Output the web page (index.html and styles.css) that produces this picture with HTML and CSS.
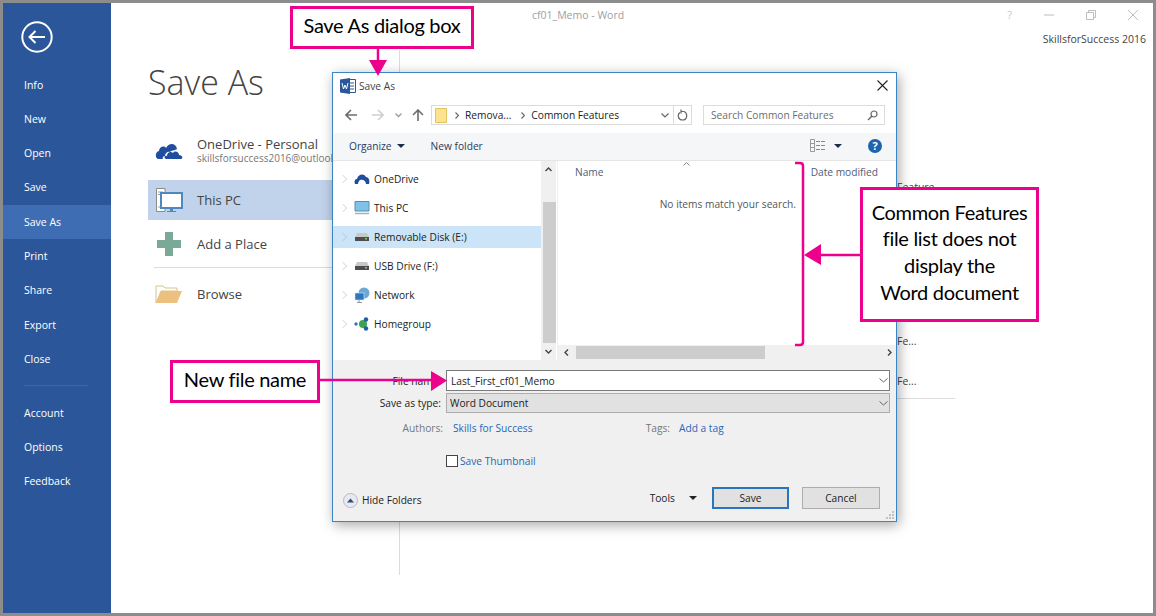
FILE: index.html
```html
<!DOCTYPE html>
<html lang="en">
<head>
    <meta charset="UTF-8">
    <title>Save As</title>
    <link rel="stylesheet" href="styles.css">
</head>
<body>
<div id="screen">
    <div id="app">
        <aside id="side">
            <svg class="back" width="32" height="32" viewBox="0 0 32 32"><circle cx="16" cy="16" r="14.7" fill="none" stroke="#fff" stroke-width="2"/><path d="M8.500 16H24M14.500 10L8.500 16L14.500 22" fill="none" stroke="#fff" stroke-width="2"/></svg>
            <ul class="menu">
                <li>Info</li>
                <li>New</li>
                <li>Open</li>
                <li>Save</li>
                <li class="on">Save As</li>
                <li>Print</li>
                <li>Share</li>
                <li>Export</li>
                <li>Close</li>
            </ul>
            <ul class="menu menu2">
                <li>Account</li>
                <li>Options</li>
                <li>Feedback</li>
            </ul>
        </aside>
        <main id="stage">
            <div class="topbar">
                <span class="doc">cf01_Memo - Word</span>
                <div class="winbtns">
                    <span class="q">?</span>
                    <svg width="10" height="10" viewBox="0 0 10 10"><path d="M0 5H10" stroke="#bdbdbd"/></svg>
                    <svg width="10" height="10" viewBox="0 0 10 10"><path d="M.5 2.500H7.500V9.500H.5ZM2.500 2.500V.5H9.500V7.500H7.500" fill="none" stroke="#bdbdbd"/></svg>
                    <svg width="10" height="10" viewBox="0 0 10 10"><path d="M0 0L10 10M10 0L0 10" stroke="#bdbdbd"/></svg>
                </div>
            </div>
            <div class="acct">SkillsforSuccess 2016</div>
            <div class="cols">
                <section class="places">
                    <h1>Save As</h1>
                    <div class="place place-two">
                        <svg class="pic" width="28" height="22" viewBox="0 0 28 22"><path d="M3 20C0 19 0 13 4 12C4 8 9 6 11 9C14 3 21 4 22 10C22 11 17 11 15 13C13 12 10 14 10 17C8 17 7 19 8 20ZM11 20C8 19 10 16 12 17C12 13 16 12 18 14C20 11 24 13 24 16C28 16 28 20 26 20Z" fill="#1f4ea1"/></svg>
                        <div>
                            <div class="pname">OneDrive - Personal</div>
                            <div class="pmail">skillsforsuccess2016@outlook.com</div>
                        </div>
                    </div>
                    <div class="place sel">
                        <svg class="pic" width="28" height="26" viewBox="0 0 28 26"><path d="M1.500 1.500H10V24.500H1.500Z" fill="#fff" stroke="#8a8a8a"/><path d="M3 5H8M3 7.500H8M3 20H8" stroke="#9a9a9a"/><path d="M6 6H27V21H6Z" fill="#fff" stroke="#4f87c0" stroke-width="2"/><path d="M15 22H18V24H21V25H12V24H15Z" fill="#4f87c0"/></svg>
                        <div class="pname">This PC</div>
                    </div>
                    <div class="place">
                        <svg class="pic" width="26" height="26" viewBox="0 0 26 26"><path d="M9 1H17V9H25V17H17V25H9V17H1V9H9Z" fill="#7aa998"/></svg>
                        <div class="pname">Add a Place</div>
                    </div>
                    <div class="place browse">
                        <svg class="pic" width="28" height="20" viewBox="0 0 28 20"><path d="M1 19V2H8L10 4H22V7H6Z" fill="#fff" stroke="#d9c08a"/><path d="M1 19L6 7H27L22 19Z" fill="#ecc17f"/></svg>
                        <div class="pname">Browse</div>
                    </div>
                </section>
                <section class="recent">
                    <div class="rrow r1">Feature</div>
                    <div class="rrow r2">Fe...</div>
                    <div class="rrow r3">Fe...</div>
                </section>
            </div>
        </main>
    </div>

    <div id="dlg">
        <div class="dtitle">
            <svg width="16" height="16" viewBox="0 0 16 16"><path d="M6 1.500H15.500V14.500H6Z" fill="#fff" stroke="#2b579a"/><path d="M9 5H14M9 8H14M9 11H14" stroke="#2b579a"/><path d="M0 1.500L10 0V16L0 14.500Z" fill="#2b579a"/><path d="M2 5L3.500 11L5 7L6.500 11L8 5" fill="none" stroke="#fff"/></svg>
            <span>Save As</span>
            <svg class="dclose" width="11" height="11" viewBox="0 0 11 11"><path d="M.5 .5L10.500 10.500M10.500 .5L.5 10.500" stroke="#222" stroke-width="1.100"/></svg>
        </div>
        <div class="dnav">
            <svg class="nv1" width="12" height="12" viewBox="0 0 12 12"><path d="M12 6H1M6 1L1 6L6 11" fill="none" stroke="#6d6d6d" stroke-width="1.600"/></svg>
            <svg class="nv2" width="12" height="12" viewBox="0 0 12 12"><path d="M0 6H11M6 1L11 6L6 11" fill="none" stroke="#cfcfcf" stroke-width="1.600"/></svg>
            <svg class="nv3" width="7" height="5" viewBox="0 0 7 5"><path d="M.5 .5L3.500 3.500L6.500 .5" fill="none" stroke="#9a9a9a" stroke-width="1.300"/></svg>
            <svg class="nv4" width="12" height="12" viewBox="0 0 12 12"><path d="M6 12V1M1 6L6 1L11 6" fill="none" stroke="#6d6d6d" stroke-width="1.600"/></svg>
            <div class="addr">
                <svg class="afold" width="12" height="15" viewBox="0 0 12 15"><path d="M.5 .5H11.500V14.500H.5Z" fill="#fbe38f" stroke="#e0c565"/></svg>
                <svg class="achev" width="4" height="7" viewBox="0 0 4 7"><path d="M.5 .5L3.500 3.500L.5 6.500" fill="none" stroke="#666" stroke-width="1.200"/></svg>
                <span>Remova...</span>
                <svg class="achev" width="4" height="7" viewBox="0 0 4 7"><path d="M.5 .5L3.500 3.500L.5 6.500" fill="none" stroke="#666" stroke-width="1.200"/></svg>
                <span>Common Features</span>
                <svg class="adrop" width="8" height="5" viewBox="0 0 8 5"><path d="M.5 .5L4 4L7.500 .5" fill="none" stroke="#666" stroke-width="1.200"/></svg>
                <div class="arefresh">
                    <svg width="11" height="12" viewBox="0 0 11 12"><path d="M4 2.500H7C11 4 10.500 11 5.500 11C1 11 0 5.500 3 3.500M4 .5V4.500" fill="none" stroke="#666" stroke-width="1.200"/></svg>
                </div>
            </div>
            <div class="search">
                <span>Search Common Features</span>
                <svg width="11" height="11" viewBox="0 0 11 11"><circle cx="7" cy="4" r="3" fill="none" stroke="#666" stroke-width="1.200"/><path d="M5 6L1 10" stroke="#666" stroke-width="1.500"/></svg>
            </div>
        </div>
        <div class="dtools">
            <span class="org">Organize</span><i class="caret"></i>
            <span class="newf">New folder</span>
            <svg class="vw" width="16" height="13" viewBox="0 0 16 13"><path d="M.5 .5H4.500V12.500H.5ZM.5 4.500H4.500M.5 8.500H4.500" fill="none" stroke="#9a9a9a"/><path d="M6 2.500H10M11 2.500H15M6 6.500H10M11 6.500H15M6 10.500H10M11 10.500H15" stroke="#8a8a8a"/></svg>
            <i class="caret caret2"></i>
            <span class="help">?</span>
        </div>
        <div class="dbody">
            <div class="tree">
                <div class="trow">
                    <svg width="16" height="12" viewBox="0 0 16 12"><path d="M1 11C0 8 1 6 3 6C4 1 10 0 12 4C15 4 16 8 15 11H12C12 8 9 6 6 7C5 8 4 9 4 11Z" fill="#1f4ea1"/></svg>
                    OneDrive
                </div>
                <div class="trow">
                    <svg width="16" height="14" viewBox="0 0 16 14"><path d="M1 .5H15V10H1Z" fill="#7fc1e8" stroke="#5b8db0"/><path d="M1 12.500H15" stroke="#9fb4c2" stroke-width="1.500"/></svg>
                    This PC
                </div>
                <div class="trow sel">
                    <svg width="16" height="10" viewBox="0 0 16 10"><path d="M3 1H13L15 5H1Z" fill="#c8c8c8"/><rect x="1" y="5" width="14" height="4" fill="#4d4d4d"/><rect x="11" y="6" width="2" height="1.500" fill="#6fd05a"/></svg>
                    Removable Disk (E:)
                </div>
                <div class="trow">
                    <svg width="16" height="10" viewBox="0 0 16 10"><path d="M3 1H13L15 5H1Z" fill="#c8c8c8"/><rect x="1" y="5" width="14" height="4" fill="#4d4d4d"/><rect x="11" y="6" width="2" height="1.500" fill="#6fd05a"/></svg>
                    USB Drive (F:)
                </div>
                <div class="trow">
                    <svg width="16" height="16" viewBox="0 0 16 16"><circle cx="10" cy="6" r="5.500" fill="#6aa9d6"/><rect x="1" y="6" width="9" height="7" fill="#2f77bd" stroke="#d5e6f3" stroke-width=".6"/><path d="M5 13V15M3 15.500H8" stroke="#8a9aa8"/></svg>
                    Network
                </div>
                <div class="trow">
                    <svg width="16" height="14" viewBox="0 0 16 14"><circle cx="2" cy="7" r="1.700" fill="#2a74c8"/><circle cx="9" cy="7" r="4" fill="#3fa34d"/><circle cx="12" cy="2.500" r="2.200" fill="#1f5fa8"/><circle cx="12" cy="11.500" r="2.200" fill="#1f5fa8"/></svg>
                    Homegroup
                </div>
            </div>
            <div class="vscroll">
                <svg class="sup" width="7" height="5" viewBox="0 0 7 5"><path d="M.5 4L3.500 1L6.500 4" fill="none" stroke="#444" stroke-width="1.400"/></svg>
                <div class="vthumb"></div>
                <svg class="sdn" width="7" height="5" viewBox="0 0 7 5"><path d="M.5 1L3.500 4L6.500 1" fill="none" stroke="#444" stroke-width="1.400"/></svg>
            </div>
            <div class="files">
                <div class="fhead">
                    <span class="fname">Name</span>
                    <svg class="sortmark" width="7" height="4" viewBox="0 0 7 4"><path d="M.5 3.500L3.500 .5L6.500 3.500" fill="none" stroke="#888"/></svg>
                    <span class="fdate">Date modified</span>
                </div>
                <div class="fempty">No items match your search.</div>
                <div class="hscroll">
                    <svg width="5" height="7" viewBox="0 0 5 7"><path d="M4 .5L1 3.500L4 6.500" fill="none" stroke="#444" stroke-width="1.400"/></svg>
                    <div class="hthumb"></div>
                    <svg width="5" height="7" viewBox="0 0 5 7"><path d="M1 .5L4 3.500L1 6.500" fill="none" stroke="#444" stroke-width="1.400"/></svg>
                </div>
            </div>
        </div>
        <div class="dform">
            <div class="frow">
                <label>File name:</label>
                <div class="inp">Last_First_cf01_Memo<svg width="9" height="5" viewBox="0 0 9 5"><path d="M.5 .5L4.500 4L8.500 .5" fill="none" stroke="#666"/></svg></div>
            </div>
            <div class="frow frow2">
                <label>Save as type:</label>
                <div class="inp inp2">Word Document<svg width="9" height="5" viewBox="0 0 9 5"><path d="M.5 .5L4.500 4L8.500 .5" fill="none" stroke="#666"/></svg></div>
            </div>
            <div class="meta">
                <span class="mlab">Authors:</span><span class="mval">Skills for Success</span>
                <span class="mlab tags">Tags:</span><span class="mval">Add a tag</span>
            </div>
            <div class="thumb"><i class="chk"></i><span>Save Thumbnail</span></div>
            <div class="dfoot">
                <svg class="hidei" width="15" height="15" viewBox="0 0 15 15"><circle cx="7.500" cy="7.500" r="7" fill="#e8eaf0" stroke="#b5bac6"/><path d="M4 9.500L7.500 5.500L11 9.500Z" fill="#2f4b7c"/></svg>
                <span class="hidet">Hide Folders</span>
                <span class="tools">Tools</span><i class="caret caret3"></i>
                <button class="btn def">Save</button>
                <button class="btn">Cancel</button>
            </div>
            <svg class="grip" width="8" height="8" viewBox="0 0 8 8"><path d="M6 0h2v2H6zM3 3h2v2H3zM6 3h2v2H6zM0 6h2v2H0zM3 6h2v2H3zM6 6h2v2H6z" fill="#c2c2c2"/></svg>
        </div>
    </div>

    <svg id="marks" width="1156" height="616" viewBox="0 0 1156 616">
        <path d="M378 49V62M860 255H818M320 380H434" stroke="#ec008c" stroke-width="2.500"/>
        <path d="M369 60H387L378 76ZM821 244V265L804 255ZM431 371L447 380.500L431 391Z" fill="#ec008c"/>
        <path d="M795 163H800Q803 163 803 166V342Q803 345 800 345H795" fill="none" stroke="#ec008c" stroke-width="2.500"/>
    </svg>

    <div class="note n1">Save As dialog box</div>
    <div class="note n2">Common Features<br>file list does not<br>display the<br>Word document</div>
    <div class="note n3">New file name</div>
</div>
</body>
</html>
```

FILE: styles.css
```css
*{
    box-sizing: border-box;
}
html,body{
    margin: 0;
    padding: 0;
}
body{
    width: 1156px;
    height: 616px;
    overflow: hidden;
    font-family: "Open Sans", "Noto Sans", sans-serif;
}
ul{
    list-style: none;
    margin: 0;
    padding: 0;
}
#screen{
    position: relative;
    width: 1156px;
    height: 616px;
    padding: 3px 3px 3px 3px;
    background: #8c8c8c;
}
#app{
    display: flex;
    height: 100%;
    background: #fff;
}

/* blue menu on the left */
#side{
    width: 108px;
    flex: none;
    background: #2b579a;
    color: #fff;
    font-size: 10.5px;
}
.back{
    display: block;
    margin: 18px 0 0 18px;
}
.menu{
    margin-top: 14.600px;
}
.menu li{
    height: 34.300px;
    line-height: 34.300px;
    padding-left: 21px;
}
.menu .on{
    background: #3e6db4;
}
.menu2{
    margin-top: 9px;
    padding-top: 10.400px;
    position: relative;
}
.menu2:before{
    content: "";
    position: absolute;
    top: 0;
    left: 21px;
    width: 64px;
    border-top: 1px solid #3d66a8;
}

/* backstage behind the dialog */
#stage{
    flex: 1;
    min-width: 0;
    display: flex;
    flex-direction: column;
}
.topbar{
    display: flex;
    height: 25px;
    align-items: center;
    padding: 0 0 2px 421px;
    font-size: 10.500px;
    color: #a0a0a0;
}
.doc{
    flex: 1;
}
.winbtns{
    display: flex;
    align-items: center;
    gap: 32px;
    padding-right: 15px;
    font-size: 11px;
    color: #c8c8c8;
}
.acct{
    text-align: right;
    padding-right: 7px;
    font-size: 10.500px;
    line-height: 22px;
    color: #444;
}
.cols{
    flex: 1;
    display: flex;
    margin-bottom: 38px;
}
.places{
    width: 251px;
    margin-left: 37px;
    padding-top: 10px;
    flex: none;
    color: #444;
}
.places h1{
    margin: 0;
    font-size: 34px;
    font-weight: 300;
    line-height: 44px;
    color: #444;
}
.place{
    display: flex;
    align-items: center;
    height: 40px;
    padding-left: 7px;
    font-size: 13px;
    color: #444;
}
.place .pic{
    flex: none;
    width: 28px;
    margin-right: 14px;
}
.place-two{
    margin-top: 26px;
    margin-bottom: 10px;
}
.place.sel{
    background: #c1d2eb;
}
.place.sel + .place{
    margin-top: 4px;
}
.pmail{
    font-size: 10px;
    color: #777;
    line-height: 12px;
    white-space: nowrap;
}
.pname{
    line-height: 16px;
}
.browse{
    margin-top: 3px;
    border-top: 1px solid #dcdcdc;
    height: 53px;
    margin-left: 6px;
    padding-left: 1px;
}
.recent{
    flex: 1;
    border-left: 1px solid #dcdcdc;
    font-size: 10.500px;
    color: #444;
}
.rrow{
    padding-left: 497px;
    line-height: 14px;
}
.r1{
    margin-top: 130px;
}
.r2{
    margin-top: 140px;
}
.r3{
    margin-top: 26px;
    padding-bottom: 10px;
    border-bottom: 1px solid #dcdcdc;
    width: 555px;
}

/* the dialog */
#dlg{
    position: absolute;
    left: 332px;
    top: 72px;
    width: 565px;
    height: 450px;
    display: flex;
    flex-direction: column;
    background: #fff;
    border: 1px solid #3a85c6;
    box-shadow: 2px 3px 12px rgba(0,0,0,.35);
    font-size: 10.200px;
    color: #222;
}
.dtitle{
    display: flex;
    align-items: center;
    height: 27px;
    flex: none;
    padding: 0 0 2px 7px;
    gap: 3px;
    color: #444;
}
.dclose{
    margin-left: auto;
    margin-right: 8px;
}
.dnav{
    display: flex;
    align-items: center;
    height: 33px;
    flex: none;
    padding-bottom: 3px;
}
.nv1{
    margin-left: 12px;
}
.nv2{
    margin-left: 15px;
}
.nv3{
    margin-left: 11px;
}
.nv4{
    margin-left: 10px;
}
.addr{
    width: 261px;
    height: 20px;
    margin-left: 7px;
    display: flex;
    align-items: center;
    border: 1px solid #dcdcdc;
    padding-left: 3px;
}
.afold{
    margin-right: 8px;
}
.achev{
    margin-right: 6px;
}
.addr span{
    margin-right: 10px;
}
.adrop{
    margin-left: auto;
    margin-right: 4px;
}
.arefresh{
    display: flex;
    align-items: center;
    justify-content: center;
    width: 18px;
    height: 18px;
    border-left: 1px solid #dcdcdc;
}
.search{
    width: 182px;
    height: 20px;
    margin-left: 11px;
    display: flex;
    align-items: center;
    justify-content: space-between;
    padding: 0 6px 0 7px;
    border: 1px solid #dcdcdc;
    color: #6d6d6d;
}
.dtools{
    display: flex;
    align-items: center;
    height: 28px;
    flex: none;
    padding: 0 0 2px 16px;
    background: #f5f6f7;
    border-bottom: 1px solid #e5e5e5;
    color: #2b3a5c;
}
.caret{
    display: block;
    width: 0;
    height: 0;
    border-left: 4px solid transparent;
    border-right: 4px solid transparent;
    border-top: 4px solid #1c2c4c;
    margin-left: 5px;
}
.newf{
    margin-left: 26px;
}
.vw{
    margin-left: auto;
}
.caret2{
    margin-left: 8px;
}
.help{
    width: 14px;
    height: 14px;
    margin: 0 14px 0 26px;
    border-radius: 50%;
    background: #1e63ae;
    color: #fff;
    font-size: 11px;
    font-weight: 700;
    line-height: 14px;
    text-align: center;
}
.dbody{
    display: flex;
    height: 199px;
    flex: none;
}
.tree{
    width: 208px;
    flex: none;
    padding-top: 7px;
}
.trow{
    display: flex;
    align-items: center;
    height: 22px;
    margin-bottom: 7px;
    padding-left: 7px;
    color: #222;
}
.trow:before{
    content: "";
    flex: none;
    width: 5px;
    height: 5px;
    margin-right: 8px;
    border-top: 1px solid #dedede;
    border-right: 1px solid #dedede;
    transform: rotate(45deg);
}
.trow svg{
    margin-right: 4px;
    flex: none;
}
.trow.sel{
    background: #cce4f7;
}
.trow.sel:before{
    border-color: #bcd0e0;
}
.vscroll{
    width: 15px;
    flex: none;
    display: flex;
    flex-direction: column;
    align-items: center;
    background: #f0f0f0;
    padding-top: 6px;
    margin-right: 1px;
}
.vthumb{
    width: 13px;
    height: 141px;
    margin: 30px 0 0 1px;
    background: #cdcdcd;
}
.sdn{
    margin-top: 6px;
}
.files{
    flex: 1;
    display: flex;
    flex-direction: column;
    min-width: 0;
    border-left: 1px solid #f0f0f0;
}
.fhead{
    position: relative;
    display: flex;
    height: 24px;
    align-items: center;
    padding: 0 0 2px 17px;
    flex: none;
    color: #4c607a;
}
.sortmark{
    position: absolute;
    left: 125px;
    top: 1px;
}
.fdate{
    margin-left: auto;
    margin-right: 18px;
}
.fempty{
    flex: 1;
    padding: 12px 100px 0 0;
    text-align: right;
    color: #555;
}
.hscroll{
    display: flex;
    align-items: center;
    height: 15px;
    flex: none;
    padding-left: 6px;
    background: #f0f0f0;
}
.hthumb{
    width: 189px;
    height: 13px;
    margin-left: 7px;
    background: #cdcdcd;
}
.hscroll svg:last-child{
    margin-left: auto;
    margin-right: 4px;
}
.dform{
    position: relative;
    flex: 1;
    background: #f0f0f0;
    padding-top: 10px;
}
.frow{
    display: flex;
    align-items: center;
    height: 21px;
    margin-bottom: 2px;
}
.frow label{
    width: 108px;
    text-align: right;
    margin-right: 5px;
}
.frow2{
    height: 20px;
}
.inp{
    display: flex;
    align-items: center;
    justify-content: space-between;
    width: 444px;
    height: 100%;
    padding: 0 1px 0 4px;
    background: #fff;
    border: 1px solid #7a7a7a;
}
.inp2{
    background: #e1e1e1;
    border-color: #adadad;
    padding-left: 3px;
}
.meta{
    display: flex;
    margin-top: 8px;
    line-height: 14px;
}
.mlab{
    width: 110px;
    text-align: right;
    margin-right: 10px;
    color: #777;
}
.mval{
    width: 192px;
    color: #2a66b8;
}
.mval:last-child{
    width: auto;
}
.tags{
    flex: 0 0 auto;
    width: 25px;
    margin-right: 9px;
}
.thumb{
    display: flex;
    align-items: center;
    margin: 19px 0 0 113px;
    color: #2a66b8;
}
.chk{
    width: 12px;
    height: 12px;
    margin-right: 2px;
    background: #fff;
    border: 1px solid #444;
}
.dfoot{
    display: flex;
    align-items: center;
    margin-top: 19px;
    padding-left: 10px;
}
.hidei,.hidet{
    margin-top: 4px;
}
.hidet{
    margin-left: 4px;
}
.tools{
    margin-left: 228px;
}
.caret3{
    margin-left: 14px;
    border-top-color: #222;
}
.btn{
    width: 78px;
    height: 22px;
    margin-left: 13px;
    padding: 0;
    background: #e1e1e1;
    border: 1px solid #adadad;
    font: inherit;
    color: #222;
}
.btn.def{
    width: 77px;
    margin-left: 15px;
    border: 2px solid #2a75bb;
}
.grip{
    position: absolute;
    right: 2px;
    bottom: 2px;
}

/* pink callouts on top */
#marks{
    position: absolute;
    left: 0;
    top: 0;
}
.note{
    position: absolute;
    display: flex;
    align-items: center;
    justify-content: center;
    text-align: center;
    padding-bottom: 5px;
    background: #fff;
    border: 3px solid #ec008c;
    color: #000;
    font-family: "Lato", "Noto Sans", sans-serif;
    font-size: 20px;
    letter-spacing: -.3px;
}
.n1{
    left: 290px;
    top: 6px;
    width: 184px;
    height: 43px;
}
.n2{
    left: 860px;
    top: 187px;
    width: 179px;
    height: 135px;
    line-height: 26.700px;
}
.n3{
    left: 170px;
    top: 360px;
    width: 150px;
    height: 43px;
}
```
